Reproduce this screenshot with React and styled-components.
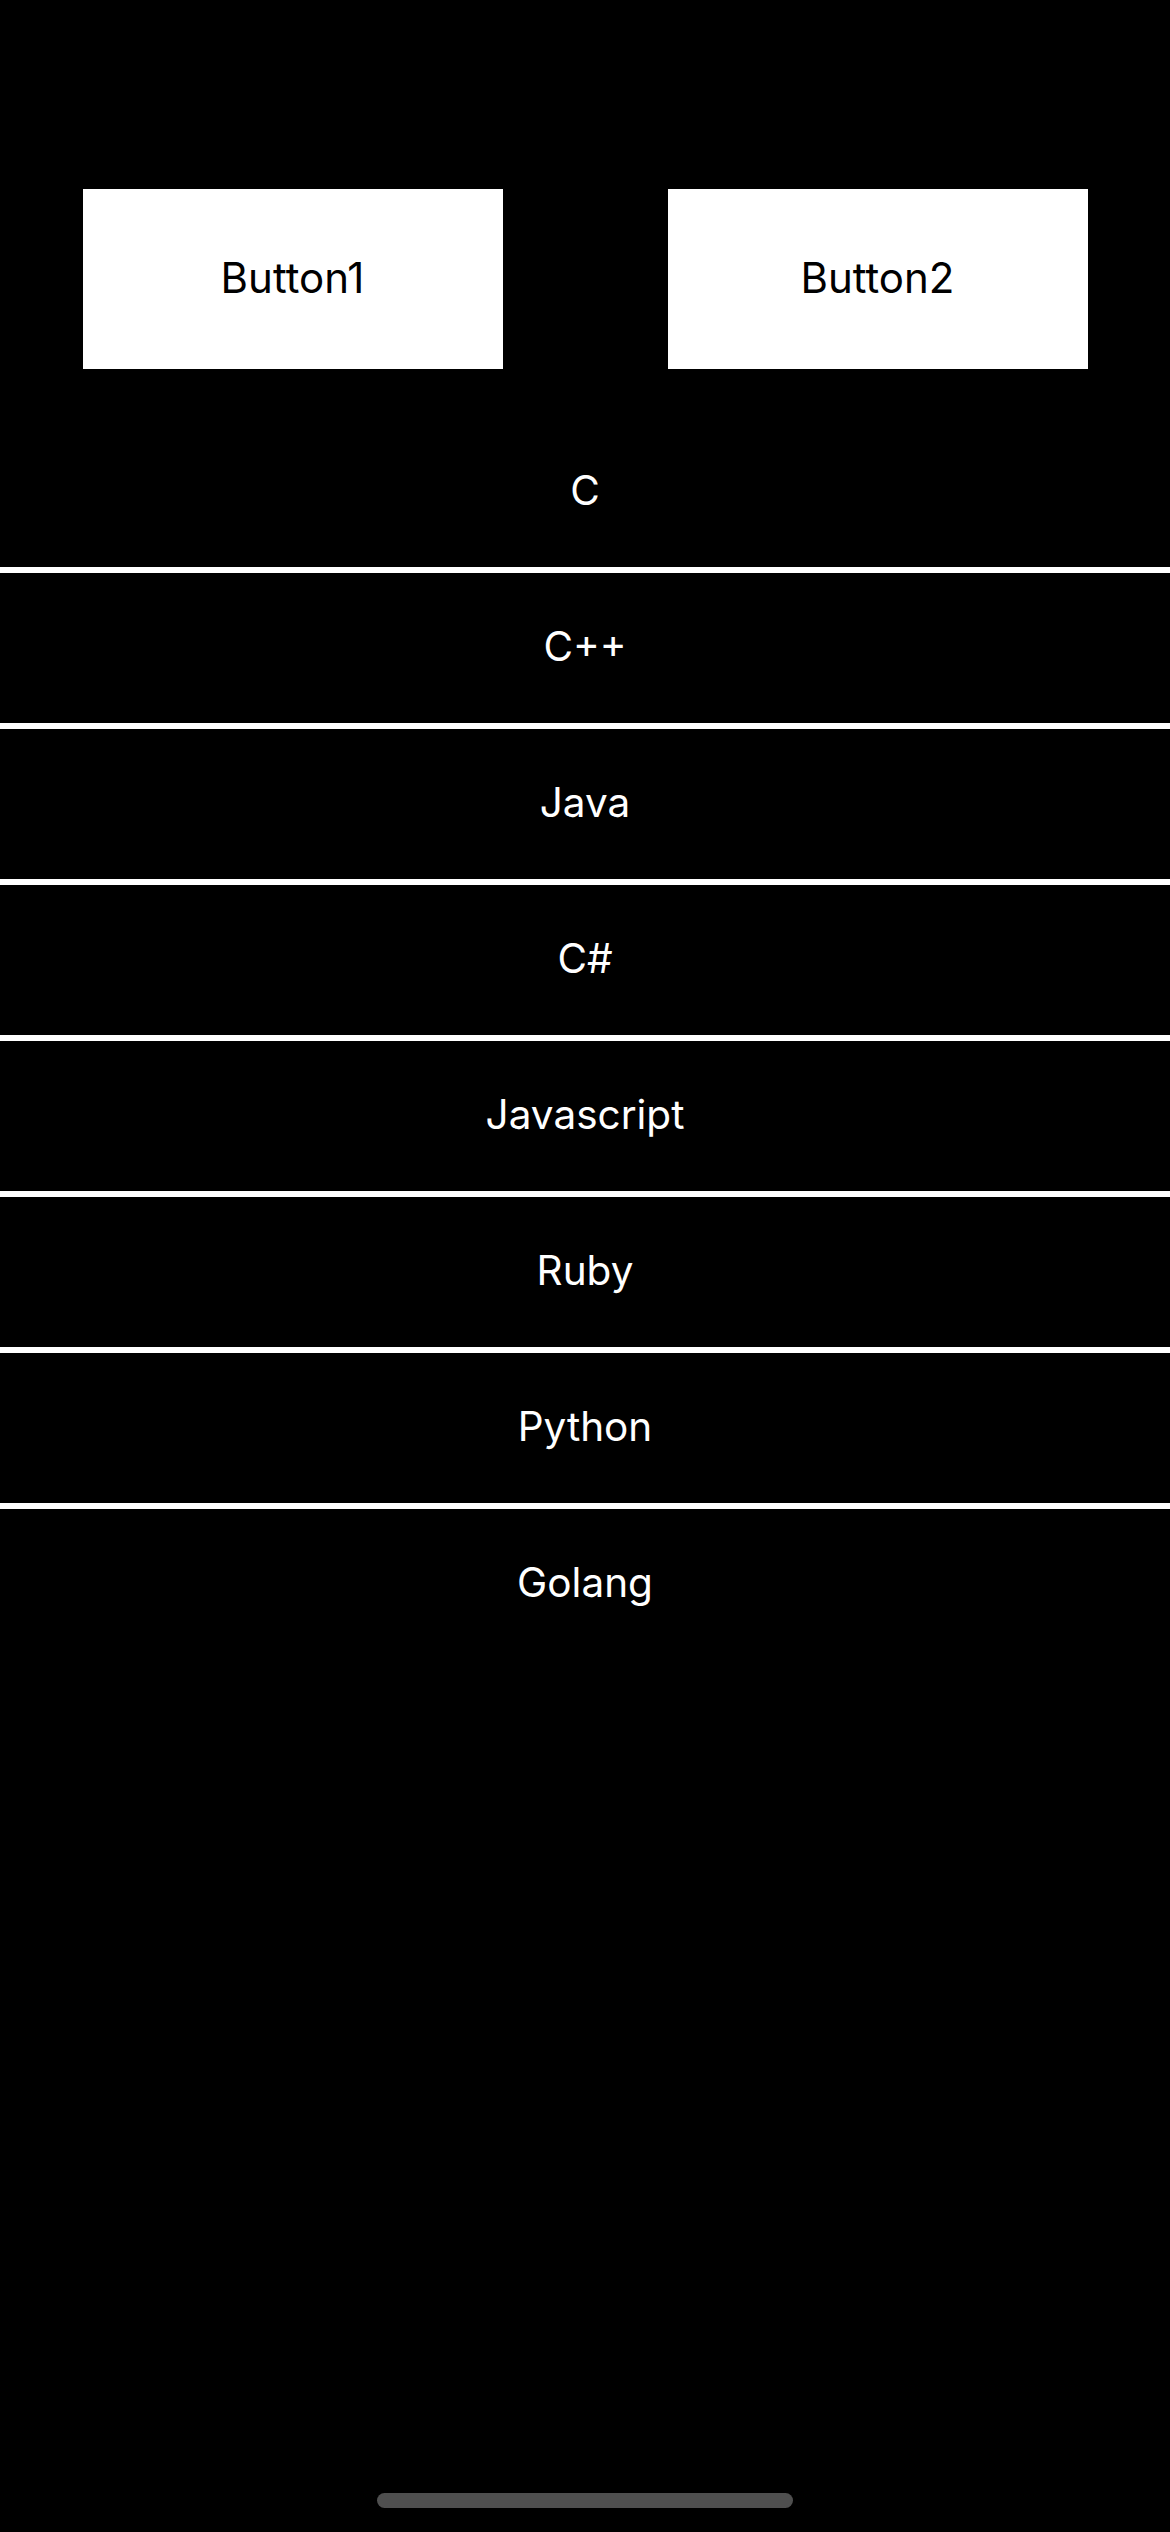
import React from "react";
import styled, { createGlobalStyle } from "styled-components";

const GlobalStyle = createGlobalStyle`
  html, body {
    margin: 0;
    padding: 0;
    background: #000;
  }
  * {
    box-sizing: border-box;
  }
`;

const Screen = styled.div`
  position: relative;
  width: 1170px;
  height: 2532px;
  background: #000;
  padding-top: 189px;
  font-family: Inter, "Noto Sans", sans-serif;
  overflow: hidden;
`;

const ButtonRow = styled.div`
  display: flex;
  justify-content: space-around;
`;

const Button = styled.button`
  width: 420px;
  height: 180px;
  border: none;
  border-radius: 0;
  background: #fff;
  color: #000;
  font-family: inherit;
  font-size: 42px;
  display: flex;
  align-items: center;
  justify-content: center;
  padding: 0 0 3px;
`;

const List = styled.div`
  margin-top: 48px;
  display: flex;
  flex-direction: column;
`;

const Row = styled.div`
  height: 150px;
  display: flex;
  align-items: center;
  justify-content: center;
  padding-bottom: 3px;
  color: #fff;
  font-size: 40.5px;
`;

const Separator = styled.div`
  height: 6px;
  background: #fff;
`;

const HomeIndicator = styled.div`
  position: absolute;
  left: 377px;
  bottom: 24px;
  width: 416px;
  height: 15px;
  border-radius: 8px;
  background: #4f4f4f;
`;

const languages = ["C", "C++", "Java", "C#", "Javascript", "Ruby", "Python", "Golang"];

const App = () => (
  <>
    <GlobalStyle />
    <Screen>
      <ButtonRow>
        <Button>Button1</Button>
        <Button>Button2</Button>
      </ButtonRow>
      <List>
        {languages.map((lang, index) => (
          <React.Fragment key={lang}>
            {index > 0 && <Separator />}
            <Row>{lang}</Row>
          </React.Fragment>
        ))}
      </List>
      <HomeIndicator />
    </Screen>
  </>
);

export default App;
